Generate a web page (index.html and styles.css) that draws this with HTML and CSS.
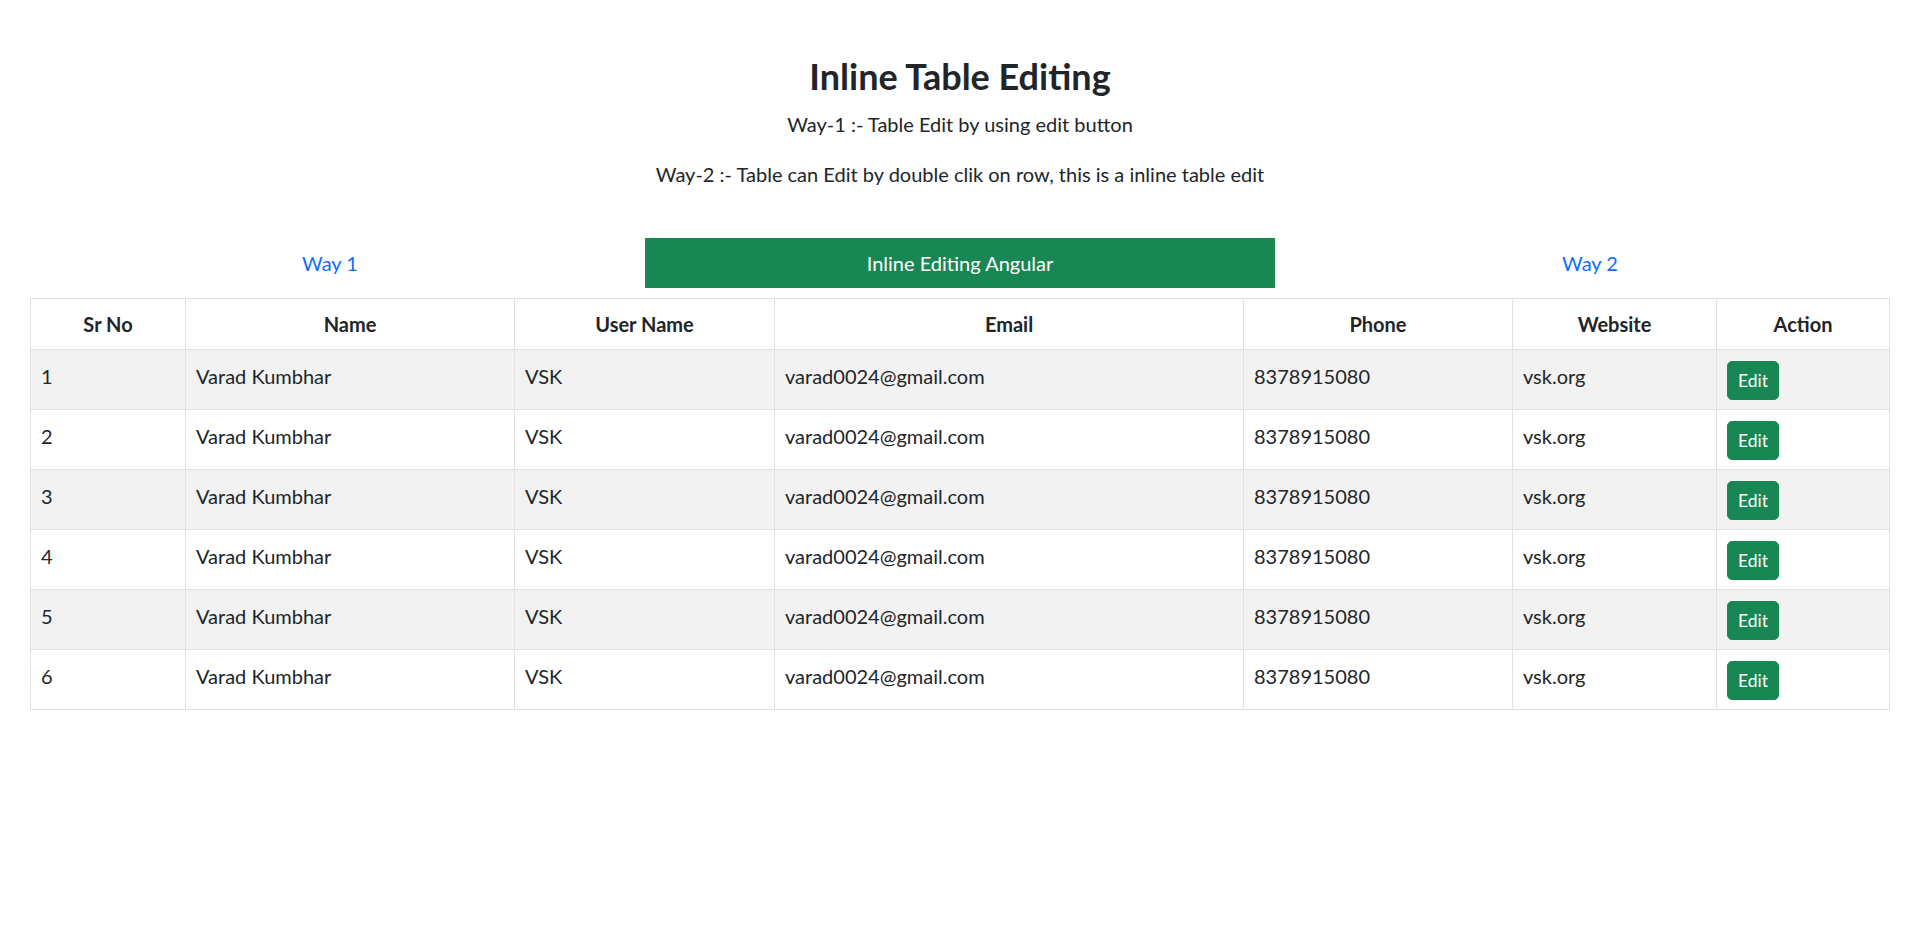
FILE: index.html
```html
<!DOCTYPE html>
<html lang="en">
<head>
  <meta charset="UTF-8">
  <meta name="viewport" content="width=device-width, initial-scale=1">
  <title>Inline Table Editing</title>
  <link rel="stylesheet" href="styles.css">
</head>
<body>

  <div class="page">
    <div class="intro">
      <h2>Inline Table Editing</h2>
      <p>Way-1 :- Table Edit by using edit button</p>
      <p>Way-2 :- Table can Edit by double clik on row, this is a inline table edit</p>
    </div>

    <nav class="tabs">
      <a class="tab" href="#">Way 1</a>
      <a class="tab active" href="#">Inline Editing Angular</a>
      <a class="tab" href="#">Way 2</a>
    </nav>

    <table class="user-table">
      <colgroup>
        <col class="col-sr">
        <col class="col-name">
        <col class="col-user">
        <col class="col-email">
        <col class="col-phone">
        <col class="col-web">
        <col class="col-action">
      </colgroup>
      <thead>
        <tr>
          <th>Sr No</th>
          <th>Name</th>
          <th>User Name</th>
          <th>Email</th>
          <th>Phone</th>
          <th>Website</th>
          <th>Action</th>
        </tr>
      </thead>
      <tbody>
        <tr>
          <td>1</td><td>Varad Kumbhar</td><td>VSK</td><td>varad0024@gmail.com</td><td>8378915080</td><td>vsk.org</td>
          <td><button class="btn-edit">Edit</button></td>
        </tr>
        <tr>
          <td>2</td><td>Varad Kumbhar</td><td>VSK</td><td>varad0024@gmail.com</td><td>8378915080</td><td>vsk.org</td>
          <td><button class="btn-edit">Edit</button></td>
        </tr>
        <tr>
          <td>3</td><td>Varad Kumbhar</td><td>VSK</td><td>varad0024@gmail.com</td><td>8378915080</td><td>vsk.org</td>
          <td><button class="btn-edit">Edit</button></td>
        </tr>
        <tr>
          <td>4</td><td>Varad Kumbhar</td><td>VSK</td><td>varad0024@gmail.com</td><td>8378915080</td><td>vsk.org</td>
          <td><button class="btn-edit">Edit</button></td>
        </tr>
        <tr>
          <td>5</td><td>Varad Kumbhar</td><td>VSK</td><td>varad0024@gmail.com</td><td>8378915080</td><td>vsk.org</td>
          <td><button class="btn-edit">Edit</button></td>
        </tr>
        <tr>
          <td>6</td><td>Varad Kumbhar</td><td>VSK</td><td>varad0024@gmail.com</td><td>8378915080</td><td>vsk.org</td>
          <td><button class="btn-edit">Edit</button></td>
        </tr>
      </tbody>
    </table>
  </div>

</body>
</html>
```

FILE: styles.css
```css
* {
  box-sizing: border-box;
}

body {
  margin: 0;
  background: #fff;
  color: #212529;
  font-family: 'Segoe UI', Lato, 'Noto Sans', sans-serif;
  font-size: 20px;
  line-height: 1.5;
}

.page {
  padding: 55px 15px 0;
}

.intro {
  text-align: center;
}

.intro h2 {
  font-size: 36px;
  font-weight: 700;
  line-height: 1.2;
  margin: 0 0 11px;
}

.intro p {
  margin: 0 0 20px;
}

.intro p:last-child {
  margin-bottom: 0;
}

.tabs {
  display: grid;
  grid-template-columns: repeat(3, 1fr);
  margin-top: 49px;
}

.tab {
  height: 50px;
  display: flex;
  align-items: center;
  justify-content: center;
  color: #0d6efd;
  text-decoration: none;
}

.tab.active {
  background: #198754;
  color: #fff;
}

.user-table {
  width: 1859px;
  margin: 10px 0 0 15px;
  border-collapse: collapse;
  table-layout: fixed;
}

.col-sr { width: 155px; }
.col-name { width: 329px; }
.col-user { width: 260px; }
.col-email { width: 469px; }
.col-phone { width: 269px; }
.col-web { width: 204px; }
.col-action { width: 173px; }

.user-table th,
.user-table td {
  border: 1px solid #dee2e6;
  padding: 11px 10px 9px;
  vertical-align: top;
  text-align: left;
}

.user-table th {
  padding: 10px;
  text-align: center;
  font-weight: 700;
}

.user-table tbody tr:nth-child(odd) td {
  background: #f2f2f2;
}

.btn-edit {
  display: block;
  height: 39px;
  padding: 5px 10px;
  background: #198754;
  color: #fff;
  border: 1px solid #198754;
  border-radius: 5px;
  font-family: inherit;
  font-size: 17.5px;
  line-height: 1.5;
  cursor: pointer;
}
```
